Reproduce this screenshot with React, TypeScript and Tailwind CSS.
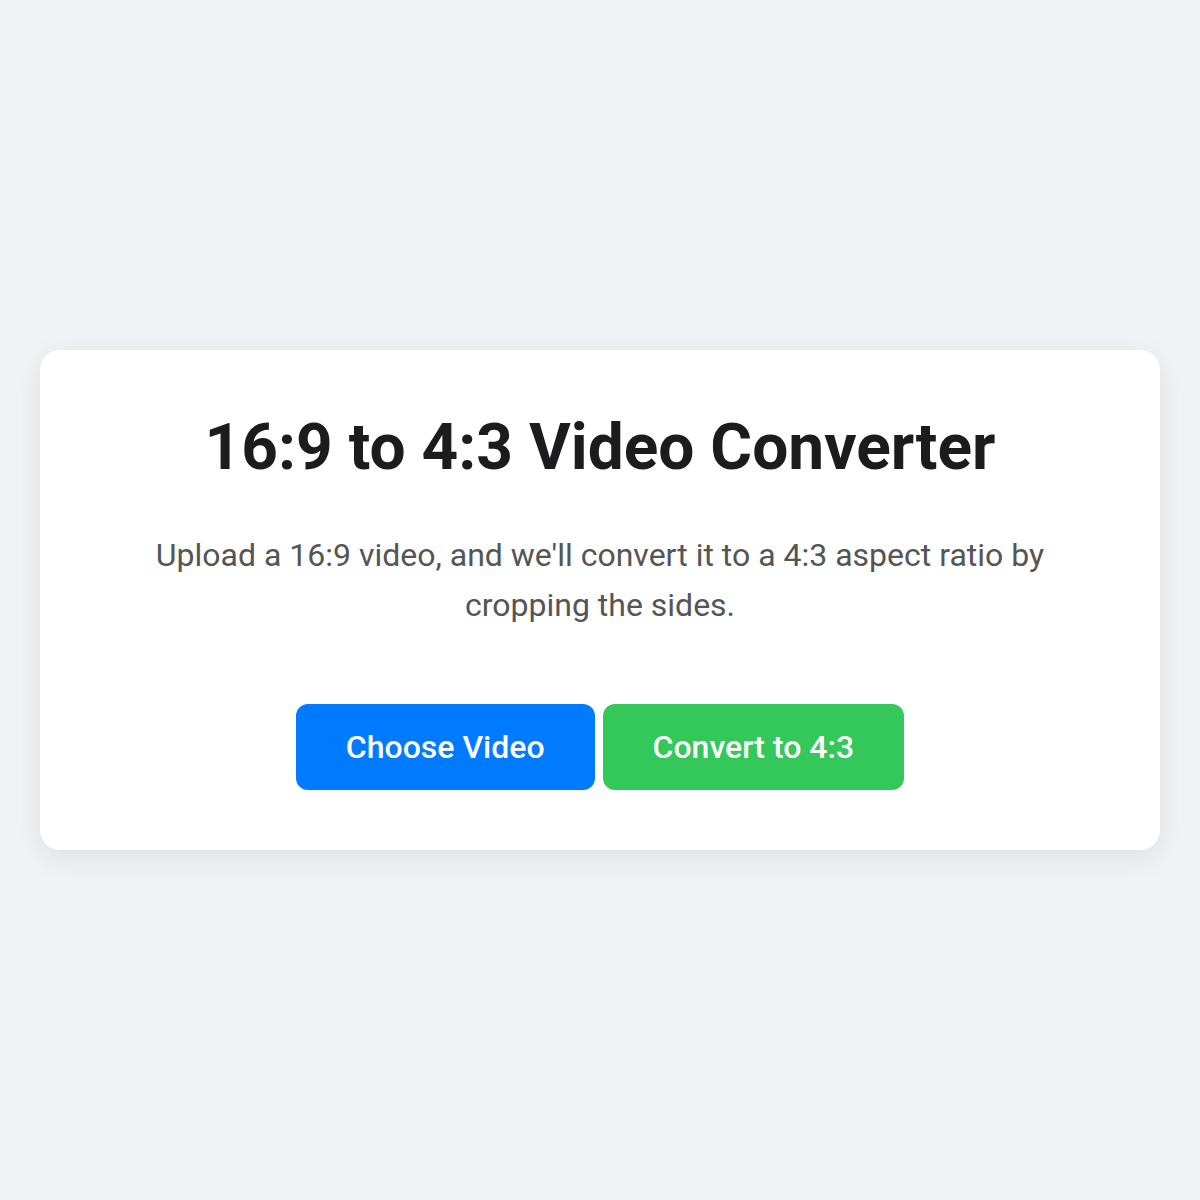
export default function App() {
  return (
    <div className="min-h-screen bg-[#f0f2f5] flex items-center justify-center px-[40px]" style={{ fontFamily: "Roboto, 'Noto Sans', sans-serif" }}>
      <div className="w-full bg-white rounded-[20px] shadow-[0_8px_30px_rgba(0,0,0,0.08)] px-[60px] py-[60px] text-center">
        <h1 className="text-[64px] font-bold text-[#1c1c1e] leading-[75px] mb-[45px]">16:9 to 4:3 Video Converter</h1>
        <p className="text-[32px] text-[#555555] leading-[50px] max-w-[900px] mx-auto mb-[74px]">
          Upload a 16:9 video, and we'll convert it to a 4:3 aspect ratio by cropping the sides.
        </p>
        <div className="flex justify-center gap-[8px]">
          <button className="bg-[#007aff] text-white text-[32px] font-medium rounded-[12px] px-[50px] h-[86px]">Choose Video</button>
          <button className="bg-[#34c759] text-white text-[32px] font-medium rounded-[12px] px-[50px] h-[86px]">Convert to 4:3</button>
        </div>
      </div>
    </div>
  );
}
